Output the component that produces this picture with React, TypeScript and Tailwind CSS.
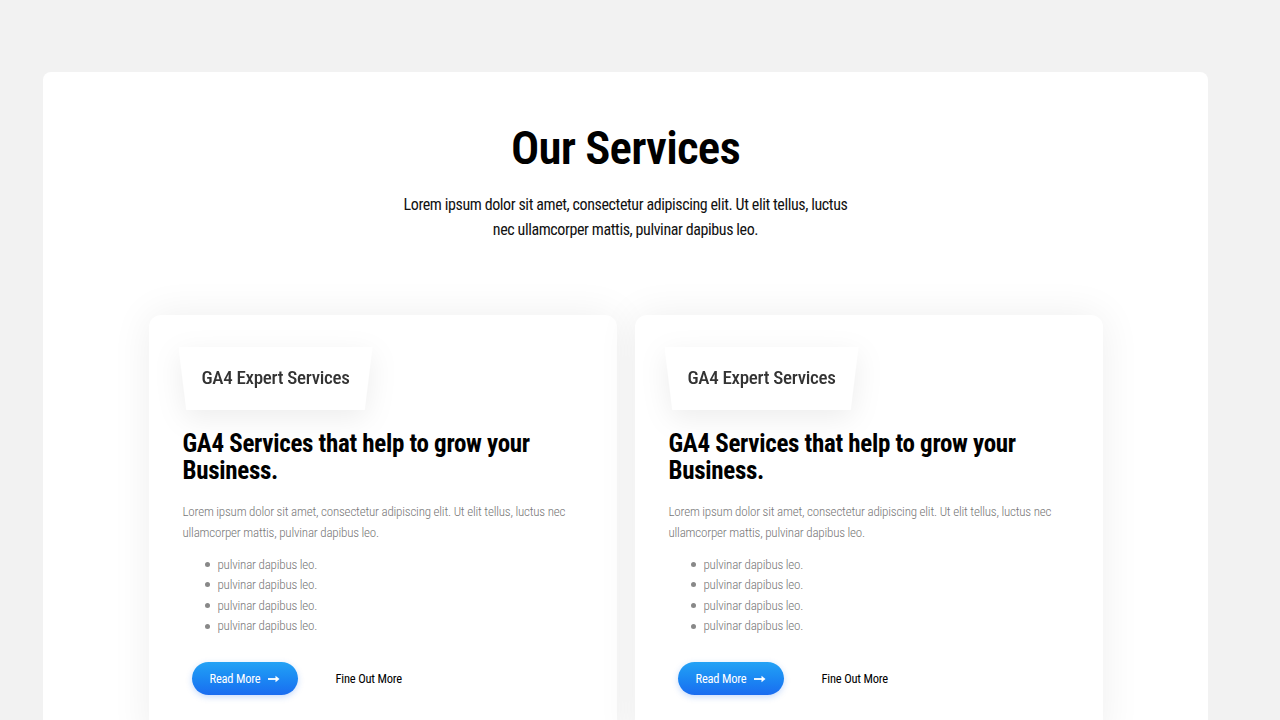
const items = ['pulvinar dapibus leo.', 'pulvinar dapibus leo.', 'pulvinar dapibus leo.', 'pulvinar dapibus leo.']

function ServiceCard() {
  return (
    <div className="w-[468px] rounded-[12px] bg-white px-[34px] pt-[32px] pb-[48px] shadow-[0_0_40px_rgba(0,0,0,0.07)]">
      <div className="-ml-[4px] w-fit drop-shadow-[0_8px_14px_rgba(0,0,0,0.07)]">
        <div className="flex h-[63px] w-[194px] items-center justify-center bg-white [clip-path:polygon(0_0,100%_0,96%_100%,4%_100%)]">
          <span className="text-[19px] font-medium tracking-[-0.3px] text-[#333]">GA4 Expert Services</span>
        </div>
      </div>
      <h2 className="mt-[20px] w-[370px] text-[25px] leading-[27px] font-bold tracking-[-0.3px] text-black">
        GA4 Services that help to grow your Business.
      </h2>
      <p className="mt-[17px] text-[13px] leading-[21px] font-light tracking-[-0.2px] text-[#777]">
        Lorem ipsum dolor sit amet, consectetur adipiscing elit. Ut elit tellus, luctus nec ullamcorper mattis, pulvinar dapibus leo.
      </p>
      <ul className="mt-[11px] flex flex-col">
        {items.map((t, i) => (
          <li key={i} className="flex h-[20.6px] items-center pl-[22px] text-[13px] font-light tracking-[-0.2px] text-[#777]">
            <span className="mr-[8px] h-[5px] w-[5px] rounded-full bg-[#888]" />
            {t}
          </li>
        ))}
      </ul>
      <div className="mt-[26px] flex items-center pl-[9px]">
        <button className="flex h-[33px] w-[106px] items-center justify-center gap-[7px] rounded-full bg-linear-to-b from-[#24a2f5] to-[#1b6cf0] text-[12.5px] font-normal tracking-[-0.2px] text-white shadow-[0_2px_6px_rgba(30,110,240,0.25)]">
          Read More
          <svg width="12" height="8" viewBox="0 0 12 8" fill="none">
            <path d="M0 4h9" stroke="white" strokeWidth="1.8" />
            <path d="M7.5 0.8L11.5 4L7.5 7.2Z" fill="white" />
          </svg>
        </button>
        <span className="ml-[38px] text-[12.5px] font-normal tracking-[-0.2px] text-black">Fine Out More</span>
      </div>
    </div>
  )
}

export default function App() {
  return (
    <div className="min-h-screen bg-[#f2f2f2] pt-[72px] pl-[43px] font-['Roboto',sans-serif] font-stretch-condensed">
      <div className="w-[1165px] rounded-t-[8px] bg-white pt-[46px]">
        <h1 className="text-center text-[47px] leading-[59px] font-semibold tracking-[-0.8px] text-black">Our Services</h1>
        <p className="mx-auto mt-[15px] w-[456px] text-center text-[16px] leading-[25px] tracking-[-0.4px] text-[#111]">
          Lorem ipsum dolor sit amet, consectetur adipiscing elit. Ut elit tellus, luctus nec ullamcorper mattis, pulvinar dapibus leo.
        </p>
        <div className="mt-[73px] flex justify-center gap-[18px]">
          <ServiceCard />
          <ServiceCard />
        </div>
      </div>
    </div>
  )
}
